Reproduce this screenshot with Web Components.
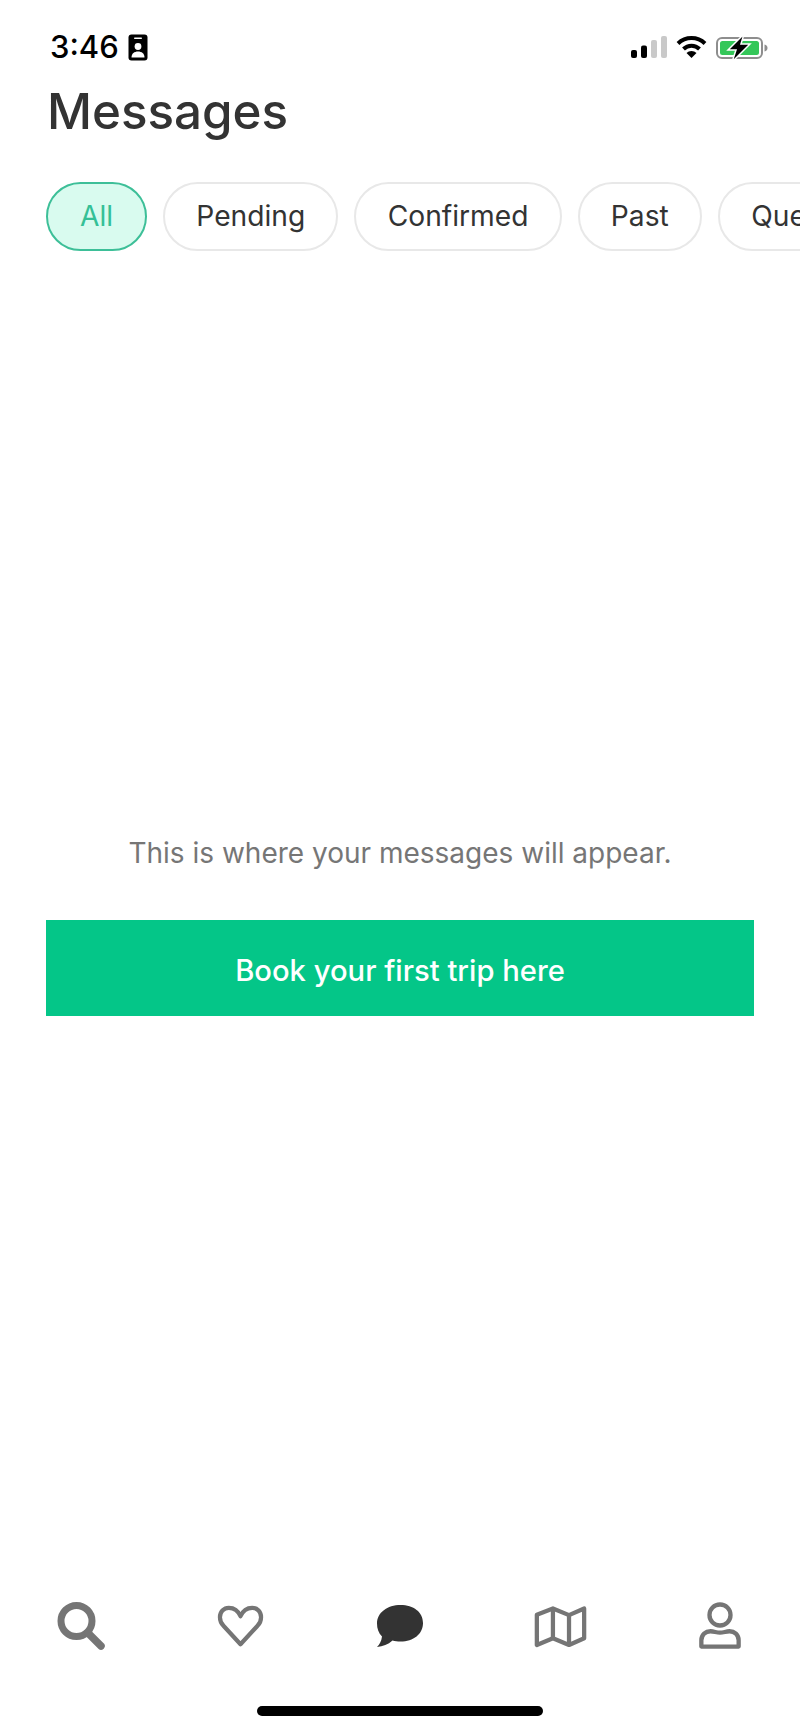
<!DOCTYPE html>
<html lang="en">
<head>
  <meta charset="UTF-8">
  <meta name="viewport" content="width=device-width, initial-scale=1.0">
  <title>Messages</title>
  <style>
    html, body {
      margin: 0;
      background: #fff;
      font-family: Inter, "Noto Sans", sans-serif;
    }
  </style>
</head>
<body>
  <messages-screen></messages-screen>
  <script>
    class StatusBar extends HTMLElement {
      constructor() {
        super()
        this.attachShadow({ mode: 'open' })
      }

      connectedCallback() {
        this.shadowRoot.innerHTML = `
          <style>
            :host {
              display: flex;
              justify-content: space-between;
              align-items: center;
              height: 34px;
              padding: 30px 32px 0 50px;
              color: #000;
            }
            .left, .right {
              display: flex;
              align-items: center;
            }
            .time {
              font: 500 31px/34px Inter, sans-serif;
              margin-right: 9px;
            }
            svg {
              display: block;
            }
            .signal, .wifi {
              margin-right: 9px;
            }
          </style>
          <div class="left">
            <span class="time">3:46</span>
            <svg width="20" height="27" viewBox="0 0 20 27">
              <rect x="0.5" y="0.5" width="19" height="26" rx="3" fill="#000"/>
              <rect x="6" y="3.5" width="8" height="1.5" rx="0.7" fill="#fff"/>
              <circle cx="10" cy="12.5" r="3.4" fill="#fff"/>
              <path d="M3.5 23.5c0-4 2.8-6 6.5-6s6.500 2 6.500 6z" fill="#fff"/>
            </svg>
          </div>
          <div class="right">
            <svg class="signal" width="36" height="26" viewBox="0 0 36 26">
              <rect x="0" y="16" width="6" height="8" rx="2" fill="#000"/>
              <rect x="10" y="11.500" width="6" height="12.500" rx="2" fill="#000"/>
              <rect x="20" y="6" width="6" height="18" rx="2" fill="#c9c9c9"/>
              <rect x="30" y="2" width="6" height="22" rx="2" fill="#c9c9c9"/>
            </svg>
            <svg class="wifi" width="31" height="24" viewBox="0 0 31 24">
              <path d="M2 8.500a19.500 19.500 0 0 1 27 0" fill="none" stroke="#000" stroke-width="4"/>
              <path d="M7.500 14a11.500 11.500 0 0 1 16 0" fill="none" stroke="#000" stroke-width="4"/>
              <path d="M15.500 23l-5-5a7 7 0 0 1 10 0z" fill="#000"/>
            </svg>
            <svg width="52" height="30" viewBox="0 0 52 30">
              <rect x="1" y="6" width="45" height="20" rx="5" fill="none" stroke="#8e8e8e" stroke-width="2"/>
              <rect x="4" y="9" width="39" height="14" rx="2.500" fill="#34c759"/>
              <path d="M48.500 12.500c2 .5 3 1.800 3 3.500s-1 3-3 3.500z" fill="#8e8e8e"/>
              <path d="M28 2 12 18h8l-4 12 18-18h-9z" fill="#000" stroke="#fff" stroke-width="1.500"/>
            </svg>
          </div>
        `
      }
    }

    class FilterChip extends HTMLElement {
      constructor() {
        super()
        this.attachShadow({ mode: 'open' })
      }

      connectedCallback() {
        this.shadowRoot.innerHTML = `
          <style>
            :host {
              display: flex;
              flex: none;
              align-items: center;
              justify-content: center;
              box-sizing: border-box;
              height: 69px;
              padding: 0 31.200px;
              border: 2px solid #e8e8e8;
              border-radius: 34.500px;
              background: #fff;
              color: #333;
              font: 400 28.200px/1 Inter, sans-serif;
            }
            :host([active]) {
              padding: 0 32px;
              border-color: #3dbf98;
              background: #d9fbef;
              color: #34c096;
            }
          </style>
          <slot></slot>
        `
      }
    }

    class FilterRow extends HTMLElement {
      constructor() {
        super()
        this.attachShadow({ mode: 'open' })
      }

      connectedCallback() {
        this.shadowRoot.innerHTML = `
          <style>
            :host {
              display: flex;
              gap: 16px;
              padding: 0 0 0 46px;
              overflow: hidden;
            }
          </style>
          <slot></slot>
        `
      }
    }

    class EmptyState extends HTMLElement {
      constructor() {
        super()
        this.attachShadow({ mode: 'open' })
      }

      connectedCallback() {
        this.shadowRoot.innerHTML = `
          <style>
            :host {
              display: flex;
              flex-direction: column;
              flex: 1;
              justify-content: flex-start;
              padding: 582px 46px 0;
            }
            p {
              margin: 0 0 47px;
              color: #767676;
              font: 400 28px/40px Inter, sans-serif;
              text-align: center;
            }
            .book {
              display: flex;
              align-items: center;
              justify-content: center;
              height: 96px;
              padding-top: 6px;
              box-sizing: border-box;
              background: #04c688;
              color: #fff;
              font: 500 29.200px/1 Inter, sans-serif;
            }
          </style>
          <p><slot name="message"></slot></p>
          <div class="book"><slot name="action"></slot></div>
        `
      }
    }

    class TabBar extends HTMLElement {
      constructor() {
        super()
        this.attachShadow({ mode: 'open' })
      }

      connectedCallback() {
        this.shadowRoot.innerHTML = `
          <style>
            :host {
              display: grid;
              grid-template-columns: repeat(5, 160px);
              height: 58px;
              justify-items: center;
              align-items: center;
            }
            svg {
              display: block;
            }
            .search {
              margin-left: 3px;
            }
          </style>
          <svg class="search" width="50" height="50" viewBox="0 0 50 50">
            <circle cx="19.500" cy="20" r="15.500" fill="none" stroke="#757575" stroke-width="7"/>
            <path d="M31 32 44 45" fill="none" stroke="#757575" stroke-width="7.500" stroke-linecap="round"/>
          </svg>
          <svg width="47" height="43" viewBox="0 0 50 46">
            <path d="M25 12C22 5 17 3 12.500 3 7 3 3 7.500 3 13c0 4 1.500 7 4 9.500L25 42l18-19.500c2.500-2.500 4-5.500 4-9.500 0-5.500-4-10-9.500-10C33 3 28 5 25 12z" fill="none" stroke="#757575" stroke-width="4.500" stroke-linejoin="round"/>
          </svg>
          <svg width="50" height="44" viewBox="0 0 50 44">
            <path d="M25.500 1C38.500 1 48 8 48 19s-9.500 18.500-22.500 18.500c-3 0-5.500-.3-8-1C13 40.500 8 42.500 2 43c2.500-2.500 4.500-6 5-10.500C3.500 29 2 24.500 2 19.500 2 8.500 12.500 1 25.500 1z" fill="#333"/>
          </svg>
          <svg width="53" height="44" viewBox="0 0 56 46">
            <path d="M3 11 20 4.500 37 11.500 53 4.500V36L37 43 20 36 3 43z" fill="none" stroke="#757575" stroke-width="4.500" stroke-linejoin="round"/>
            <path d="M20 4.500V36M37 11.500V43" fill="none" stroke="#757575" stroke-width="4.500"/>
          </svg>
          <svg width="44" height="48" viewBox="0 0 46 50">
            <circle cx="23" cy="13.500" r="11" fill="none" stroke="#757575" stroke-width="4.500"/>
            <path d="M3.500 46.500V40C3.500 34 8 30.500 13 30.500c4 0 6 1.500 10 1.500s6-1.500 10-1.500c5 0 9.500 3.500 9.500 9.500v6.500z" fill="none" stroke="#757575" stroke-width="4.500" stroke-linejoin="round"/>
          </svg>
        `
      }
    }

    class MessagesScreen extends HTMLElement {
      constructor() {
        super()
        this.attachShadow({ mode: 'open' })
      }

      connectedCallback() {
        this.shadowRoot.innerHTML = `
          <style>
            :host {
              display: flex;
              flex-direction: column;
              height: 1731px;
              overflow: hidden;
              background: #fff;
            }
            h1 {
              margin: 5px 0 28px;
              padding-left: 47px;
              color: #333;
              font: 500 49.300px/85px Inter, sans-serif;
            }
            .home {
              align-self: center;
              width: 286px;
              height: 10px;
              margin: 51px 0 15px;
              border-radius: 5px;
              background: #000;
            }
          </style>
          <status-bar></status-bar>
          <h1>Messages</h1>
          <filter-row>
            <filter-chip active>All</filter-chip>
            <filter-chip>Pending</filter-chip>
            <filter-chip>Confirmed</filter-chip>
            <filter-chip>Past</filter-chip>
            <filter-chip>Questions</filter-chip>
          </filter-row>
          <empty-state>
            <span slot="message">This is where your messages will appear.</span>
            <span slot="action">Book your first trip here</span>
          </empty-state>
          <tab-bar></tab-bar>
          <div class="home"></div>
        `
      }
    }

    customElements.define('status-bar', StatusBar)
    customElements.define('filter-chip', FilterChip)
    customElements.define('filter-row', FilterRow)
    customElements.define('empty-state', EmptyState)
    customElements.define('tab-bar', TabBar)
    customElements.define('messages-screen', MessagesScreen)
  </script>
</body>
</html>
